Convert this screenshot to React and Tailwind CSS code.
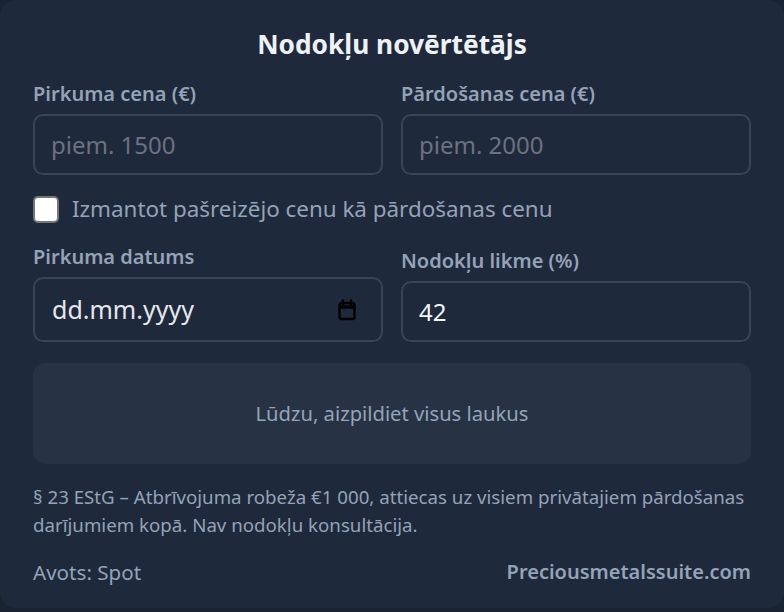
import React, { useState } from "react";

const font = { fontFamily: '"Noto Sans", "Open Sans", sans-serif' };

const CalendarIcon = () => (
  <svg width="24" height="24" viewBox="0 0 24 24" fill="none" stroke="#000" strokeWidth="2.4" strokeLinecap="round">
    <rect x="4.5" y="5" width="15" height="16" rx="2" />
    <path d="M4.5 9h15" strokeWidth="3.5" strokeLinecap="butt" />
    <path d="M8 2.5v3.5M16 2.5v3.5" />
  </svg>
);

const Label = ({ children }) => (
  <label className="block text-[20px] font-semibold text-[#94a3b8] leading-[28px] mb-[6px]">
    {children}
  </label>
);

const TaxEstimator = () => {
  const [buyPrice, setBuyPrice] = useState("");
  const [sellPrice, setSellPrice] = useState("");
  const [useSpot, setUseSpot] = useState(false);
  const [rate, setRate] = useState("42");

  return (
    <div className="min-h-screen bg-[#1a2332]" style={font}>
      <div className="h-[608px] bg-[#1e293b] rounded-2xl px-[33px] pt-[26px] flex flex-col">
        <h1 className="text-center text-[26.3px] font-bold text-[#eef2f7] leading-[36px] mb-[18px]">
          Nodokļu novērtētājs
        </h1>

        <div className="grid grid-cols-2 gap-x-[18px]">
          <div>
            <Label>Pirkuma cena (€)</Label>
            <input
              type="text"
              value={buyPrice}
              onChange={(e) => setBuyPrice(e.target.value)}
              placeholder="piem. 1500"
              className="w-full h-[61px] px-[16px] bg-[#1e293b] border-2 border-[#384559] rounded-[10px] text-[24px] text-[#e5e7eb] placeholder:text-[#6b7280] outline-none"
            />
          </div>
          <div>
            <Label>Pārdošanas cena (€)</Label>
            <input
              type="text"
              value={sellPrice}
              onChange={(e) => setSellPrice(e.target.value)}
              placeholder="piem. 2000"
              className="w-full h-[61px] px-[16px] bg-[#1e293b] border-2 border-[#384559] rounded-[10px] text-[24px] text-[#e5e7eb] placeholder:text-[#6b7280] outline-none"
            />
          </div>
        </div>

        <label className="flex items-center gap-[13px] mt-[19px] cursor-pointer">
          <span
            onClick={() => setUseSpot(!useSpot)}
            className="w-[26px] h-[27px] bg-white border-2 border-[#767676] rounded-[5px] shrink-0"
          />
          <span className="text-[22.4px] text-[#94a3b8] leading-[30px]">
            Izmantot pašreizējo cenu kā pārdošanas cenu
          </span>
        </label>

        <div className="grid grid-cols-2 gap-x-[18px] items-end mt-[19px]">
          <div>
            <Label>Pirkuma datums</Label>
            <div className="h-[65px] pl-[17px] pr-[22px] border-2 border-[#384559] rounded-[10px] flex items-center justify-between">
              <span className="text-[25px] text-[#e5e7eb]">dd.mm.yyyy</span>
              <CalendarIcon />
            </div>
          </div>
          <div>
            <Label>Nodokļu likme (%)</Label>
            <input
              type="text"
              value={rate}
              onChange={(e) => setRate(e.target.value)}
              className="w-full h-[61px] px-[16px] bg-[#1e293b] border-2 border-[#384559] rounded-[10px] text-[24px] text-[#f1f5f9] outline-none"
            />
          </div>
        </div>

        <div className="mt-[21px] h-[101px] bg-[#273244] rounded-xl flex items-center justify-center">
          <span className="text-[20.2px] text-[#94a3b8]">Lūdzu, aizpildiet visus laukus</span>
        </div>

        <p className="mt-[19px] text-[18.7px] leading-[28px] text-[#94a3b8]">
          § 23 EStG – Atbrīvojuma robeža €1 000, attiecas uz visiem privātajiem pārdošanas darījumiem kopā. Nav nodokļu konsultācija.
        </p>

        <div className="mt-[18px] flex items-center justify-between">
          <span className="text-[20.6px] text-[#94a3b8]">Avots: Spot</span>
          <span className="text-[20px] font-semibold text-[#94a3b8]">Preciousmetalssuite.com</span>
        </div>
      </div>
    </div>
  );
};

export default function App() {
  return <TaxEstimator />;
}
